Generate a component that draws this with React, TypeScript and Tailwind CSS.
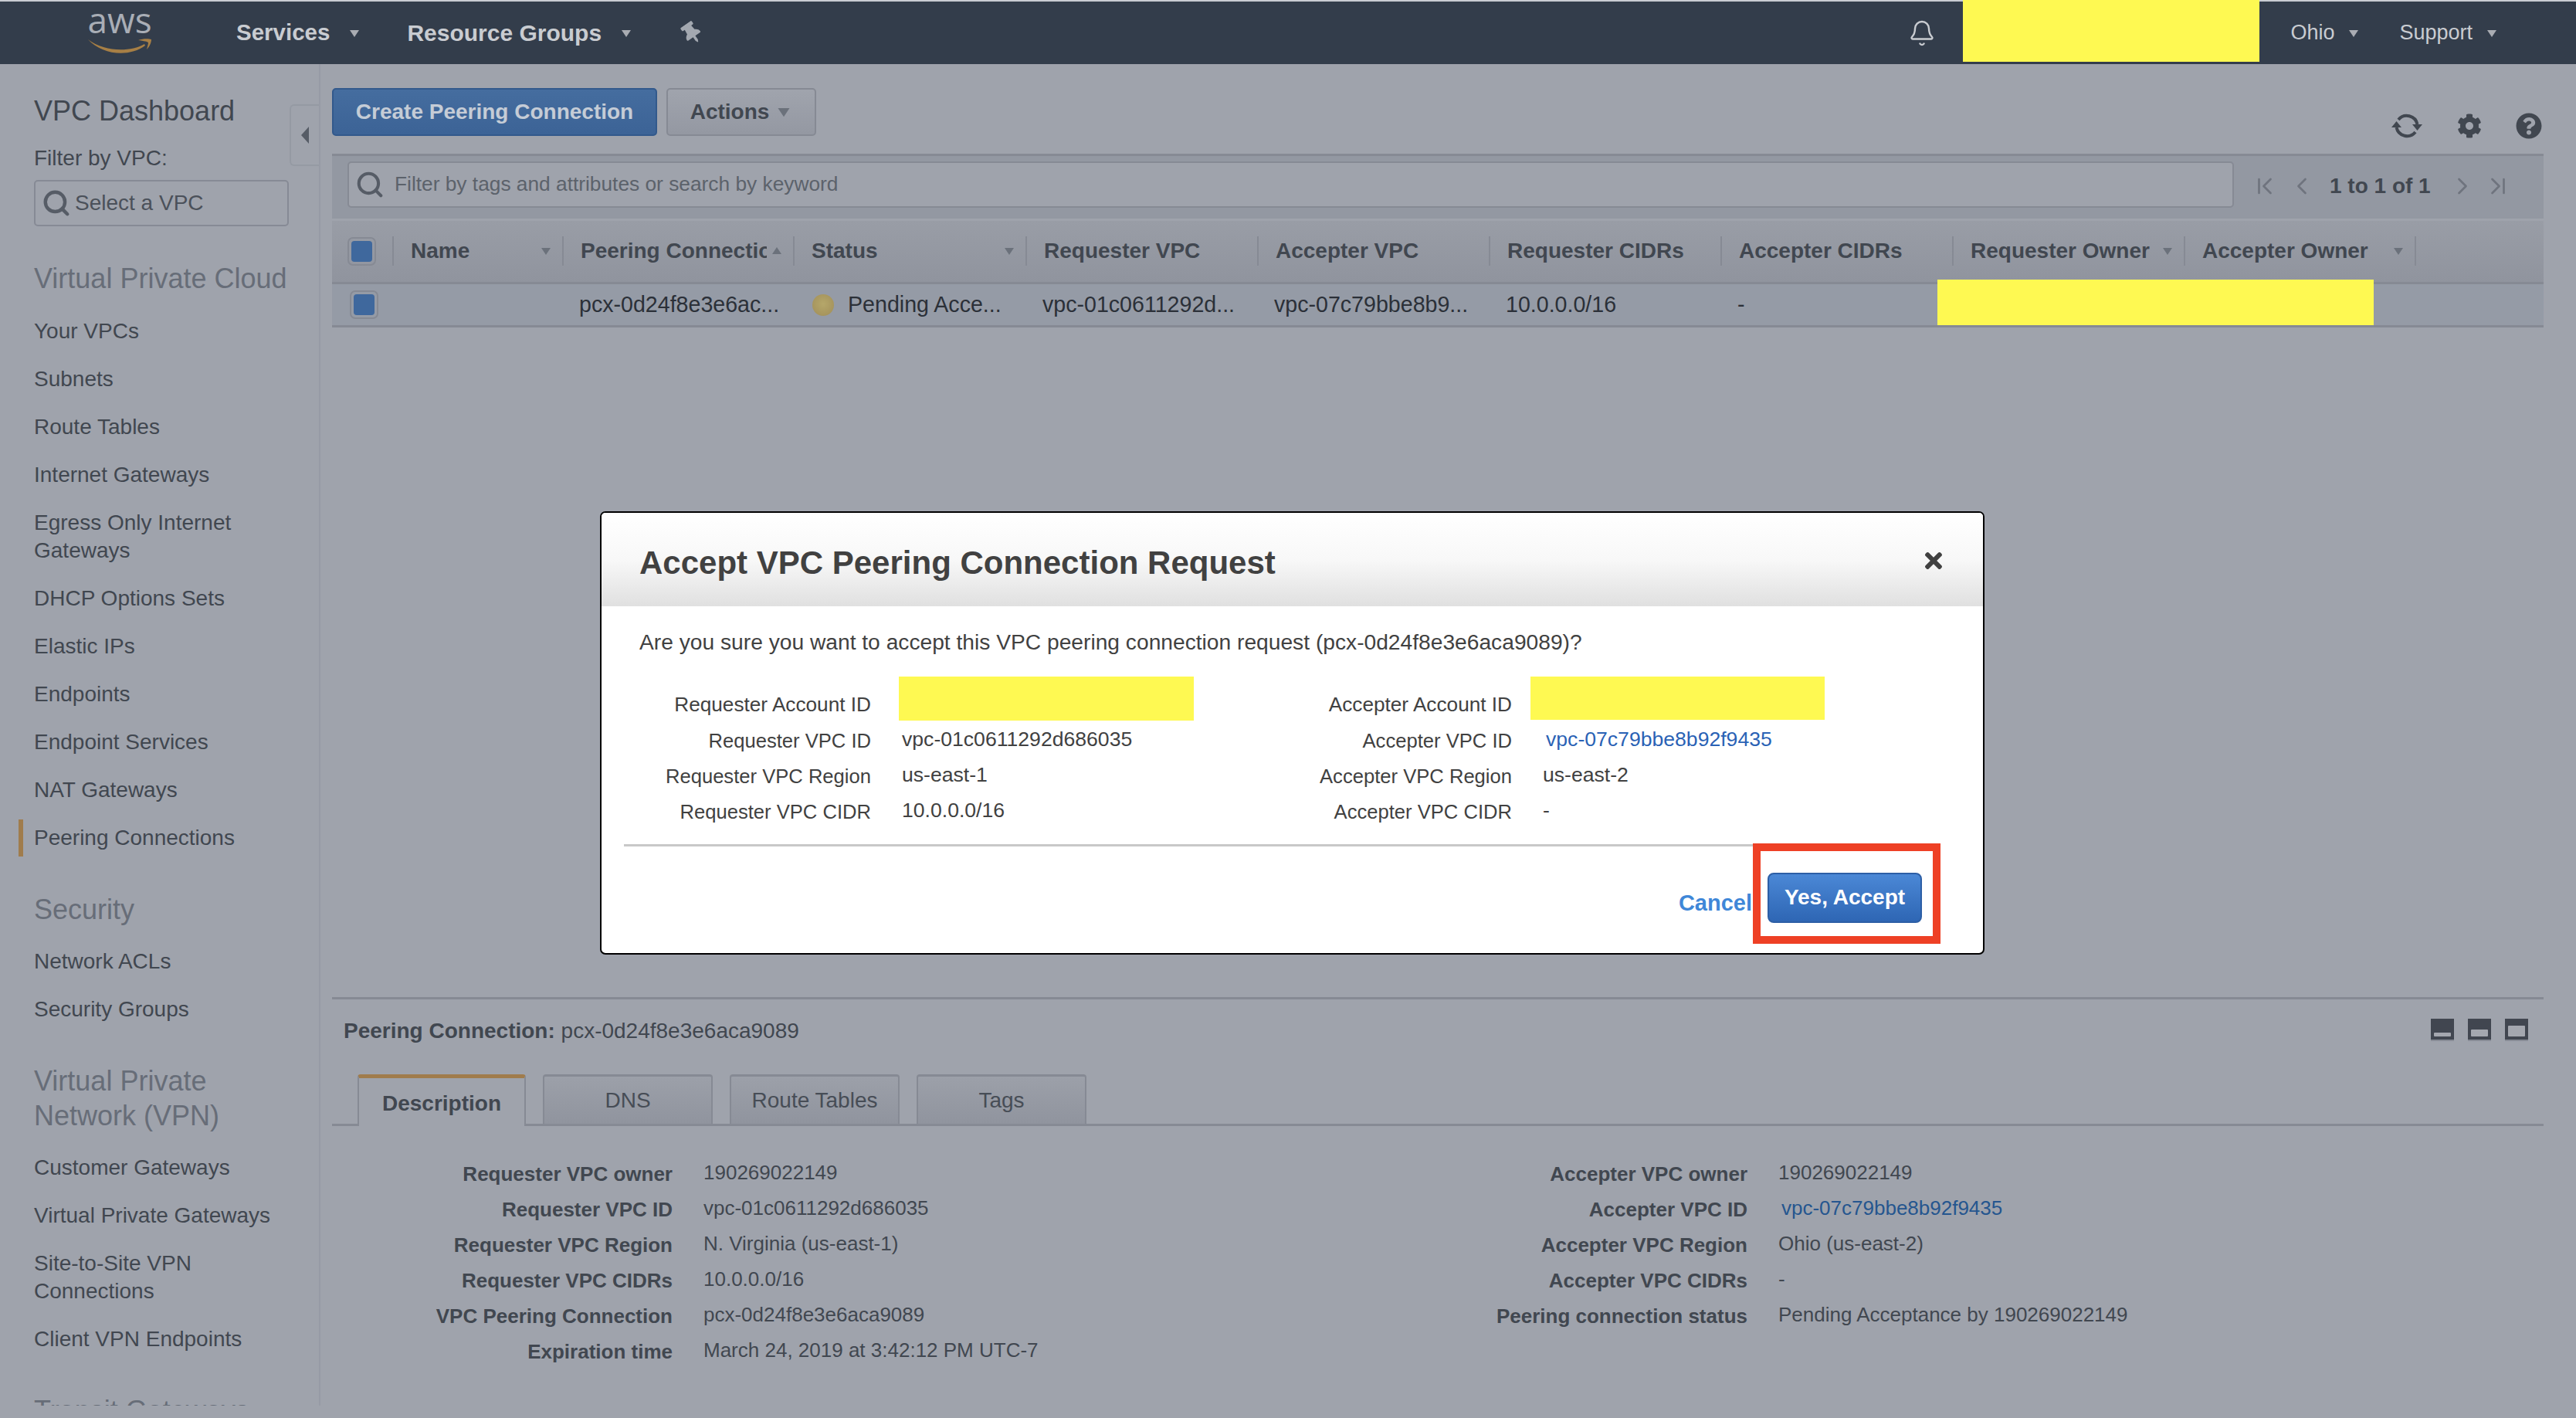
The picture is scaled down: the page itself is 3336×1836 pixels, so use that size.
import React from "react";
import { ChevronFirst, ChevronLast, ChevronLeft, ChevronRight, Search, Bell } from "lucide-react";
import { FaCog, FaQuestionCircle, FaThumbtack, FaTimes } from "react-icons/fa";

const Caret = ({ up, className }: { up?: boolean; className?: string }) => (
  <svg width="14" height="12" viewBox="0 0 14 12" className={className}>
    <path d={up ? "M7 1 L13 10 L1 10 Z" : "M1 2 L13 2 L7 11 Z"} fill="currentColor" />
  </svg>
);

const SyncIcon = () => (
  <svg width="42" height="34" viewBox="0 0 42 34" className="text-[#414750]">
    <path d="M10 9 A14 14 0 0 1 34.5 15" fill="none" stroke="currentColor" strokeWidth="4" />
    <path d="M28 15 H41 L34.5 23 Z" fill="currentColor" />
    <path d="M32 25 A14 14 0 0 1 7.5 19" fill="none" stroke="currentColor" strokeWidth="4" />
    <path d="M1 19 H14 L7.5 11 Z" fill="currentColor" />
  </svg>
);

const Item = ({ children, mb = "mb-[26px]" }: { children: React.ReactNode; mb?: string }) => (
  <div className={"text-[28px] leading-[36px] text-[#414750] " + mb}>{children}</div>
);

const Heading = ({ children, className }: { children: React.ReactNode; className: string }) => (
  <div className={"text-[36px] leading-[45px] text-[#676d78] " + className}>{children}</div>
);

function Sidebar() {
  return (
    <aside className="relative h-[1737px] w-[415px] shrink-0 overflow-hidden border-r-2 border-[#979ba5] pl-[44px]">
      <div className="mt-[43px] text-[36px] leading-[36px] text-[#414750]">VPC Dashboard</div>
      <div className="mt-[25px] text-[28px] leading-[36px] text-[#414750]">Filter by VPC:</div>
      <div className="mt-[10px] flex h-[60px] w-[330px] items-center rounded-[5px] border-2 border-[#868a95] pl-[8px] text-[28px] text-[#4b515a]">
        <Search size={38} strokeWidth={2.8} className="mr-[5px] text-[#565c66]" />
        Select a VPC
      </div>
      <Heading className="mt-[45px] mb-[28px]">Virtual Private Cloud</Heading>
      <Item>Your VPCs</Item>
      <Item>Subnets</Item>
      <Item>Route Tables</Item>
      <Item>Internet Gateways</Item>
      <Item>Egress Only Internet<br />Gateways</Item>
      <Item>DHCP Options Sets</Item>
      <Item>Elastic IPs</Item>
      <Item>Endpoints</Item>
      <Item>Endpoint Services</Item>
      <Item>NAT Gateways</Item>
      <div className="relative mb-[26px] text-[28px] leading-[36px] text-[#414750]">
        <span className="absolute -left-[20px] -top-[6px] h-[48px] w-[6px] bg-[#a07c4c]" />
        Peering Connections
      </div>
      <Heading className="mt-[52px] mb-[27px]">Security</Heading>
      <Item>Network ACLs</Item>
      <Item>Security Groups</Item>
      <Heading className="mt-[52px] mb-[27px]">Virtual Private<br />Network (VPN)</Heading>
      <Item>Customer Gateways</Item>
      <Item>Virtual Private Gateways</Item>
      <Item>Site-to-Site VPN<br />Connections</Item>
      <Item>Client VPN Endpoints</Item>
      <Heading className="mt-[52px]">Transit Gateways</Heading>
      <div className="absolute right-0 top-[52px] flex h-[80px] w-[38px] items-center justify-center rounded-l-[6px] border-y-2 border-l-2 border-r-0 border-[#959aa3]">
        <svg width="12" height="22" viewBox="0 0 12 22"><path d="M11 0 V22 L1 11 Z" fill="#565c66" /></svg>
      </div>
    </aside>
  );
}

const Col = ({ w, children, sort, up }: { w: string; children: string; sort?: boolean; up?: boolean }) => (
  <div className={"flex h-[38px] items-center border-r-2 border-[#868a94] pl-[22px] pr-[14px] " + w}>
    <span className="flex-1 overflow-hidden whitespace-nowrap font-bold text-[#414750]">{children}</span>
    {sort && <Caret up={up} className="ml-[6px] shrink-0 text-[#6b717b]" />}
  </div>
);

const Cell = ({ w, children }: { w: string; children?: React.ReactNode }) => (
  <div className={"flex items-center overflow-hidden whitespace-nowrap pl-[20px] " + w}>{children}</div>
);

const Check = () => (
  <div className="flex h-[37px] w-[37px] items-center justify-center rounded-[7px] border-2 border-[#868a94]">
    <div className="h-[27px] w-[27px] rounded-[4px] bg-[#3f689d]" />
  </div>
);

function Table() {
  return (
    <>
      <div className="flex h-[84px] items-center border-t-[3px] border-[#868a94] bg-[#9398a2] pb-[3px] pl-[20px]">
        <div className="mt-[7px] flex h-[60px] w-[2443px] items-center self-start rounded-[5px] border-2 border-[#868a94] bg-[#9fa3ac] pl-[8px] text-[26.3px] text-[#5c626b]">
          <Search size={38} strokeWidth={2.6} className="mr-[13px] text-[#565c66]" />
          Filter by tags and attributes or search by keyword
        </div>
        <div className="ml-[22px] flex items-center text-[#6f747e]">
          <ChevronFirst size={36} strokeWidth={1.8} />
          <ChevronLeft size={36} strokeWidth={1.8} className="ml-[12px]" />
          <span className="ml-[18px] w-[133px] text-[28px] font-bold text-[#414750]">1 to 1 of 1</span>
          <ChevronRight size={36} strokeWidth={1.8} className="ml-[21px]" />
          <ChevronLast size={36} strokeWidth={1.8} className="ml-[10px]" />
        </div>
      </div>
      <div className="flex h-[85px] items-center border-y-[3px] border-y-[#868a94] border-t-[#9fa3ac] bg-gradient-to-b from-[#999da6] to-[#90949e] pb-[1px] text-[28px]">
        <div className="flex h-[38px] w-[80px] items-center border-r-2 border-[#868a94] pl-[20px]"><Check /></div>
        <Col w="w-[220px]" sort>Name</Col>
        <Col w="w-[299px]" sort up>Peering Connection ID</Col>
        <Col w="w-[301px]" sort>Status</Col>
        <Col w="w-[300px]">Requester VPC</Col>
        <Col w="w-[300px]">Accepter VPC</Col>
        <Col w="w-[300px]">Requester CIDRs</Col>
        <Col w="w-[300px]">Accepter CIDRs</Col>
        <Col w="w-[300px]" sort>Requester Owner</Col>
        <Col w="w-[299px]" sort>Accepter Owner</Col>
      </div>
      <div className="flex h-[56px] items-stretch border-b-[3px] border-[#868a94] bg-[#959ba6] text-[28.6px] leading-none text-[#2b3038]">
        <div className="flex w-[80px] items-center pl-[23px]"><Check /></div>
        <Cell w="w-[220px]" />
        <Cell w="w-[299px]">pcx-0d24f8e3e6ac...</Cell>
        <div className="flex w-[301px] items-center whitespace-nowrap pl-[23px]">
          <span className="mr-[18px] h-[28px] w-[28px] rounded-full bg-[radial-gradient(circle_at_50%_45%,#b5a76a,#a08d58)]" />
          Pending Acce...
        </div>
        <Cell w="w-[300px]">vpc-01c0611292d...</Cell>
        <Cell w="w-[300px]">vpc-07c79bbe8b9...</Cell>
        <Cell w="w-[300px]">10.0.0.0/16</Cell>
        <Cell w="w-[300px]">-</Cell>
      </div>
    </>
  );
}

const Detail = ({ k, v, link }: { k: string; v: string; link?: boolean }) => (
  <div className="flex h-[46px] items-center text-[26px]">
    <span className="w-[481px] pr-[40px] text-right font-bold text-[#414750]">{k}</span>
    <span className={link ? "ml-[4px] -translate-y-[2px] text-[#25568f]" : "-translate-y-[2px] text-[#414750]"}>{v}</span>
  </div>
);

const Tab = ({ children, active }: { children: string; active?: boolean }) =>
  active ? (
    <div className="relative z-10 -mb-[3px] flex h-[67px] w-[218px] items-center justify-center rounded-t-[4px] border-x-2 border-t-[5px] border-x-[#868a94] border-t-[#a07c4c] bg-[#9fa3ac] pt-[4px] text-[28px] font-bold text-[#414750]">
      {children}
    </div>
  ) : (
    <div className="flex h-[64px] w-[220px] items-center justify-center rounded-t-[4px] border-x-2 border-t-[3px] border-[#868a94] bg-gradient-to-b from-[#9ca0a9] to-[#90949e] text-[28px] text-[#474d56]">
      {children}
    </div>
  );

const PaneIcon = ({ h }: { h: string }) => (
  <div className="flex h-[29px] w-[30px] flex-col justify-end border-b-2 border-[#868a94] bg-[#414650] px-[4px] pb-[4px]">
    <div className={"rounded-[1px] bg-[#a4a7af] " + h} />
  </div>
);

function BottomPane() {
  return (
    <div className="h-[545px] border-t-[3px] border-[#868a94]">
      <div className="flex h-[99px] items-center justify-between pl-[15px] pr-[20px]">
        <div className="pb-[18px] text-[28px] text-[#414750]">
          <span className="font-bold">Peering Connection:</span> pcx-0d24f8e3e6aca9089
        </div>
        <div className="flex gap-[18px] pb-[20px]">
          <PaneIcon h="h-[5px]" />
          <PaneIcon h="h-[9px]" />
          <PaneIcon h="h-[14px]" />
        </div>
      </div>
      <div className="flex h-[65px] items-end gap-[22px] border-b-[3px] border-[#868a94] pl-[33px]">
        <Tab active>Description</Tab>
        <Tab>DNS</Tab>
        <Tab>Route Tables</Tab>
        <Tab>Tags</Tab>
      </div>
      <div className="mt-[39px] flex">
        <div className="w-[1392px]">
          <Detail k="Requester VPC owner" v="190269022149" />
          <Detail k="Requester VPC ID" v="vpc-01c0611292d686035" />
          <Detail k="Requester VPC Region" v="N. Virginia (us-east-1)" />
          <Detail k="Requester VPC CIDRs" v="10.0.0.0/16" />
          <Detail k="VPC Peering Connection" v="pcx-0d24f8e3e6aca9089" />
          <Detail k="Expiration time" v="March 24, 2019 at 3:42:12 PM UTC-7" />
        </div>
        <div>
          <Detail k="Accepter VPC owner" v="190269022149" />
          <Detail k="Accepter VPC ID" v="vpc-07c79bbe8b92f9435" link />
          <Detail k="Accepter VPC Region" v="Ohio (us-east-2)" />
          <Detail k="Accepter VPC CIDRs" v="-" />
          <Detail k="Peering connection status" v="Pending Acceptance by 190269022149" />
        </div>
      </div>
    </div>
  );
}

const MRow = ({ k, v, link, hl }: { k: string; v?: string; link?: boolean; hl?: boolean }) => (
  <div className="flex h-[46px] items-center text-[#414141]">
    <span className={"w-[349px] text-right " + (hl ? "text-[26.2px]" : "text-[25.6px]")}>{k}</span>
    {hl ? null : (
      <span className={"text-[26.6px] -translate-y-[1px] " + (link ? "ml-[44px] text-[#2a62b5]" : "ml-[40px]")}>{v}</span>
    )}
  </div>
);

function Modal() {
  return (
    <div className="absolute left-[777px] top-[662px] h-[574px] w-[1793px] rounded-[7px] border-2 border-black bg-white">
      <div className="relative flex h-[121px] items-center rounded-t-[5px] bg-gradient-to-b from-white via-[#f8f8f8] to-[#e0e0e0] pt-[8px] pl-[49px] text-[42px] font-bold text-[#414141]">
        Accept VPC Peering Connection Request
        <FaTimes size={32} className="absolute right-[48px] top-[46px] text-[#414141]" />
      </div>
      <div className="pl-[49px] pt-[28px] text-[28.2px] leading-[36px] text-[#414141]">
        Are you sure you want to accept this VPC peering connection request (pcx-0d24f8e3e6aca9089)?
      </div>
      <div className="mt-[41px] flex">
        <div className="w-[830px]">
          <MRow k="Requester Account ID" hl />
          <MRow k="Requester VPC ID" v="vpc-01c0611292d686035" />
          <MRow k="Requester VPC Region" v="us-east-1" />
          <MRow k="Requester VPC CIDR" v="10.0.0.0/16" />
        </div>
        <div>
          <MRow k="Accepter Account ID" hl />
          <MRow k="Accepter VPC ID" v="vpc-07c79bbe8b92f9435" link />
          <MRow k="Accepter VPC Region" v="us-east-2" />
          <MRow k="Accepter VPC CIDR" v="-" />
        </div>
      </div>
      <div className="ml-[29px] mr-[60px] mt-[19px] h-[3px] bg-[#c8c8c8]" />
      <div className="mr-[79px] mt-[34px] flex items-center justify-end">
        <span className="mt-[14px] mr-[20px] text-[29px] font-bold text-[#3f87d8]">Cancel</span>
        <div className="flex h-[65px] w-[200px] items-center justify-center rounded-[8px] border-2 border-[#2d5fa6] bg-gradient-to-b from-[#4b88d6] to-[#2e66b4] pb-[2px] text-[28px] font-bold text-white">
          Yes, Accept
        </div>
      </div>
      <div className="absolute left-[1491px] top-[428px] h-[130px] w-[243px] border-[10px] border-[#ee4025]" />
      <div className="absolute left-[385px] top-[212px] h-[57px] w-[382px] bg-[#fef952]" />
      <div className="absolute left-[1203px] top-[212px] h-[56px] w-[381px] bg-[#fef952]" />
    </div>
  );
}

export default function App() {
  return (
    <div className="relative h-[1836px] w-[3336px] overflow-hidden bg-[#9fa3ac] font-['Liberation_Sans',Arial,sans-serif]">
      <header className="relative flex h-[83px] items-center border-t-[2px] border-[#c9ccd2] bg-[#333d4b] text-[#c9ccd1]">
        <div className="relative ml-[113px] h-[56px] w-[84px]">
          <span className="absolute -top-[10px] left-0 w-full text-center font-['Open_Sans',sans-serif] text-[46px] font-normal leading-[40px] text-[#a9aeb6]">aws</span>
          <svg viewBox="0 0 84 28" className="absolute left-0 top-[32px] h-[28px] w-[84px]">
            <path d="M1 4 C22 20 55 21 74 10 L75 12 C55 27 20 25 1 4 Z" fill="#a77f45" />
            <path d="M66 5 C72 3 79 3 83 4 C83 9 80 14 77 17 C78 13 79 10 79 8 C76 6 71 6 66 5 Z" fill="#a77f45" />
          </svg>
        </div>
        <span className="ml-[109px] text-[29.5px] font-bold">Services</span>
        <Caret className="ml-[25px] text-[#a9acb2]" />
        <span className="ml-[61px] text-[30px] font-bold">Resource Groups</span>
        <Caret className="ml-[25px] text-[#a9acb2]" />
        <FaThumbtack size={28} className="ml-[64px] -rotate-[35deg] text-[#a3a8b0]" />
        <Bell size={36} strokeWidth={1.6} className="ml-auto" />
        <div className="ml-[459px] text-[27px]">Ohio</div>
        <Caret className="ml-[18px] text-[#a9acb2]" />
        <div className="ml-[52px] text-[27px]">Support</div>
        <Caret className="ml-[18px] mr-[102px] text-[#a9acb2]" />
      </header>
      <div className="absolute left-[2542px] top-0 h-[80px] w-[384px] bg-[#fef952]" />
      <div className="flex">
        <Sidebar />
        <main className="mr-[42px] flex h-[1753px] flex-1 flex-col pl-[15px]">
          <div className="flex h-[116px] items-start pt-[31px]">
            <div className="flex h-[62px] w-[421px] items-center justify-center rounded-[5px] border-2 border-[#32598c] bg-gradient-to-b from-[#456d9f] to-[#3c6396] text-[28px] font-bold text-[#c5ccd6]">
              Create Peering Connection
            </div>
            <div className="ml-[12px] flex h-[62px] w-[194px] items-center justify-center rounded-[5px] border-2 border-[#868a94] bg-gradient-to-b from-[#a0a4ad] to-[#9498a2] text-[28px] font-bold text-[#414750]">
              <span className="-ml-[4px]">Actions</span>
              <Caret className="ml-[12px] scale-125 text-[#6b717b]" />
            </div>
            <div className="ml-auto mt-[32px] flex items-center text-[#414750]">
              <SyncIcon />
              <FaCog size={32} className="ml-[44px]" />
              <FaQuestionCircle size={34} className="ml-[44px] mr-[2px]" />
            </div>
          </div>
          <Table />
          <div className="flex-1" />
          <BottomPane />
        </main>
      </div>
      <div className="absolute left-[2509px] top-[362px] h-[59px] w-[565px] bg-[#fef952]" />
      <Modal />
    </div>
  );
}
